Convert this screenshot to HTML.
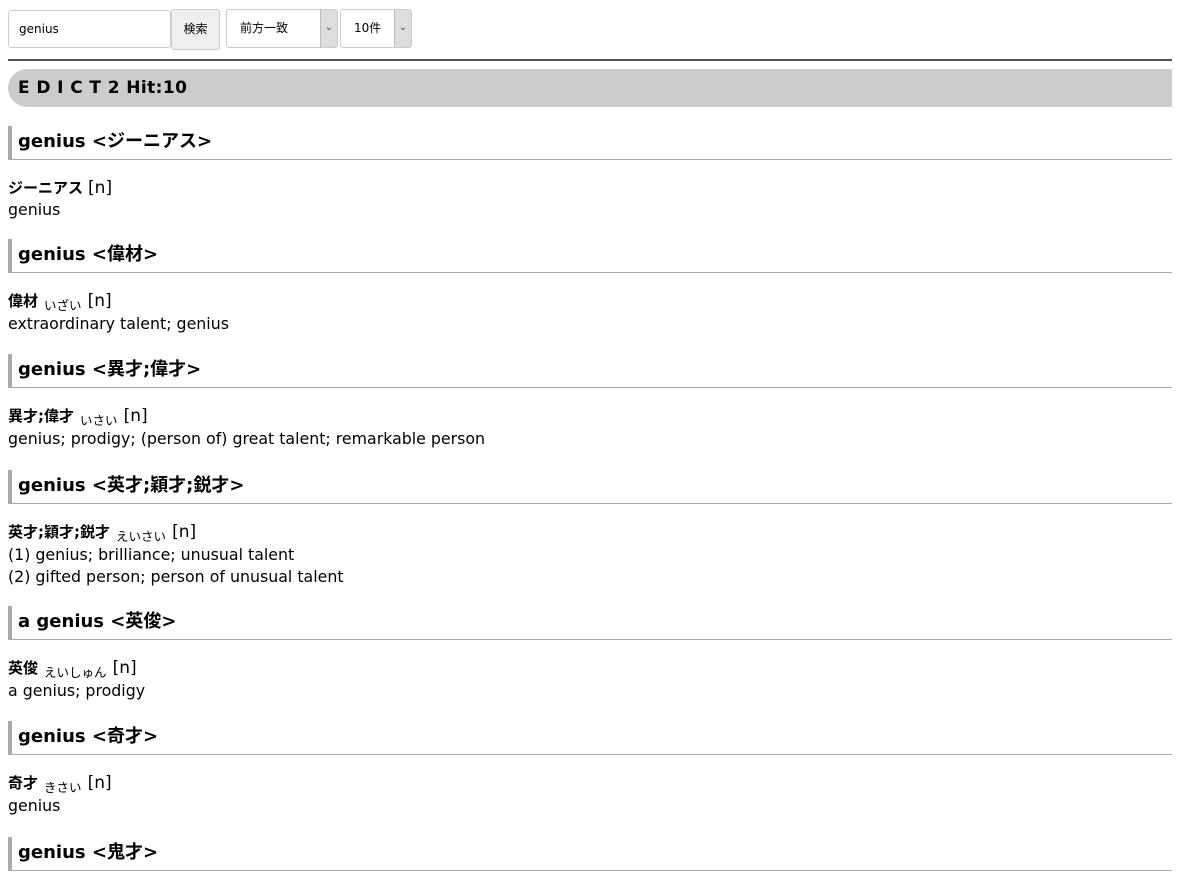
<!DOCTYPE html>
<html><head><meta charset="utf-8"><style>
body{margin:0;width:1180px;height:886px;overflow:hidden;background:#fff;font-family:"DejaVu Sans","Noto Sans CJK JP",sans-serif;color:#000;position:relative}
.a{position:absolute}
.inp{left:8px;top:10px;width:163px;height:38px;border:1px solid #ccc;border-radius:3px;box-sizing:border-box;font-size:12px;line-height:36px;padding-left:10px}
.btn{left:171px;top:9px;width:49px;height:41px;border:1px solid #ccc;border-radius:3px;background:#efefef;box-sizing:border-box;font-size:12px;line-height:39px;text-align:center}
.sel{top:9px;height:39px;border:1px solid #ccc;border-radius:3px;box-sizing:border-box;font-size:12px;line-height:37px;padding-left:13px}
.arr{position:absolute;right:0;top:0;width:16px;height:37px;background:#ddd;border-left:1px solid #bbb;font-size:10px;text-align:center;color:#555;line-height:35px}
.hr{left:8px;top:59px;width:1164px;height:2px;background:#555}
.bar{left:8px;top:69px;width:1164px;height:38px;background:#ccc;border-radius:19px 0 0 19px;font-weight:bold;font-size:17px;line-height:38px;padding-left:10px;box-sizing:border-box;letter-spacing:.4px}
.h{left:8px;width:1164px;border-left:4px solid #aaa;border-bottom:1px solid #aaa;box-sizing:border-box;font-weight:bold;font-size:18px;padding-left:6px;height:34px;line-height:31px}
.e{left:8px;font-size:15.8px;line-height:22px;white-space:nowrap}
.e b{font-size:15px}
.n{font-size:17px}
.k{font-size:12.5px;position:relative;top:4px;margin:0 1px}
</style></head><body>
<div class="a inp">genius</div>
<div class="a btn">検索</div>
<div class="a sel" style="left:226px;width:112px">前方一致<div class="arr">⌄</div></div>
<div class="a sel" style="left:340px;width:72px">10件<div class="arr">⌄</div></div>
<div class="a hr"></div>
<div class="a bar">E D I C T 2 Hit:10</div>

<div class="a h" style="top:126px">genius &lt;ジーニアス&gt;</div>
<div class="a e" style="top:177px"><b>ジーニアス</b> <span class="n">[n]</span><br>genius</div>

<div class="a h" style="top:239px">genius &lt;偉材&gt;</div>
<div class="a e" style="top:290px"><b>偉材</b> <span class="k">いざい</span> <span class="n">[n]</span><br>extraordinary talent; genius</div>

<div class="a h" style="top:354px">genius &lt;異才;偉才&gt;</div>
<div class="a e" style="top:405px"><b>異才;偉才</b> <span class="k">いさい</span> <span class="n">[n]</span><br>genius; prodigy; (person of) great talent; remarkable person</div>

<div class="a h" style="top:470px">genius &lt;英才;穎才;鋭才&gt;</div>
<div class="a e" style="top:521px"><b>英才;穎才;鋭才</b> <span class="k">えいさい</span> <span class="n">[n]</span><br>(1) genius; brilliance; unusual talent<br>(2) gifted person; person of unusual talent</div>

<div class="a h" style="top:606px">a genius &lt;英俊&gt;</div>
<div class="a e" style="top:657px"><b>英俊</b> <span class="k">えいしゅん</span> <span class="n">[n]</span><br>a genius; prodigy</div>

<div class="a h" style="top:721px">genius &lt;奇才&gt;</div>
<div class="a e" style="top:772px"><b>奇才</b> <span class="k">きさい</span> <span class="n">[n]</span><br>genius</div>

<div class="a h" style="top:837px">genius &lt;鬼才&gt;</div>
</body></html>
